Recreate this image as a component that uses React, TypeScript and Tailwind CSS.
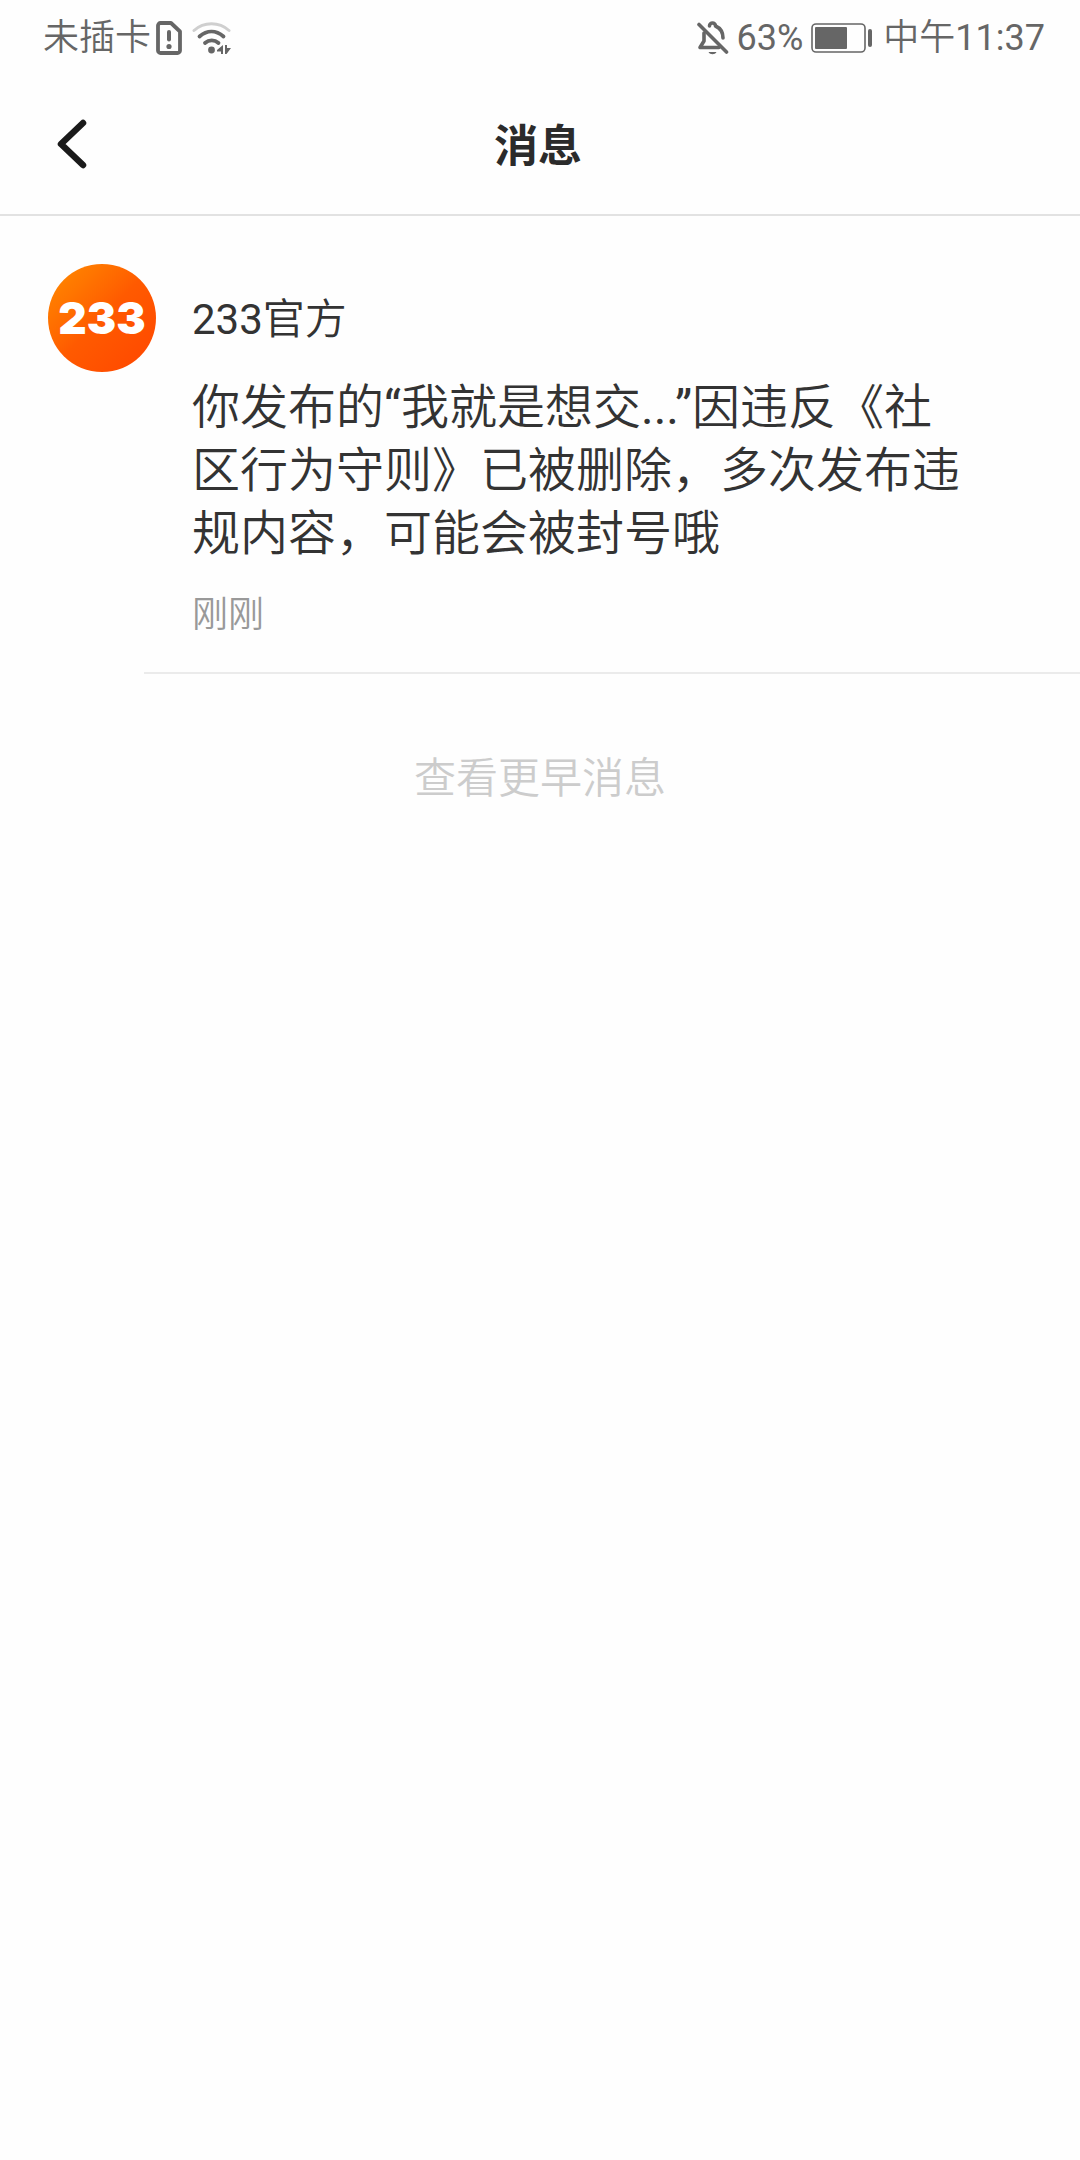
const messages = [
  {
    id: 1,
    sender: "233官方",
    text: "你发布的“我就是想交...”因违反《社区行为守则》已被删除，多次发布违规内容，可能会被封号哦",
    time: "刚刚",
  },
];

function SimAlertIcon() {
  return (
    <svg width="26" height="34" viewBox="0 0 26 34" fill="none" stroke="#666" aria-hidden="true">
      <path d="M4.500 2H15L24 10.500V29.500A2.500 2.500 0 0 1 21.500 32H4.500A2.500 2.500 0 0 1 2 29.500V4.500A2.500 2.500 0 0 1 4.500 2Z" strokeWidth="3.800" strokeLinejoin="round" />
      <path d="M13 11V18.500" strokeWidth="4" strokeLinecap="round" />
      <circle cx="13" cy="25.500" r="2.600" fill="#666" stroke="none" />
    </svg>
  );
}

function WifiIcon() {
  return (
    <svg width="40" height="34" viewBox="0 0 40 34" fill="none" strokeLinecap="round" aria-hidden="true">
      <path d="M2 9.500C12 0.500 27 0.500 37 9.500" stroke="#cfcfcf" strokeWidth="3" />
      <path d="M7.500 15.500C15 9 24 9 31.500 15.500" stroke="#666" strokeWidth="3.800" />
      <path d="M13 22C17 18.500 22.500 18.500 26.500 22" stroke="#666" strokeWidth="3.800" />
      <circle cx="19.500" cy="29" r="3.400" fill="#666" />
      <path d="M25 29L31 24V33H29V30.500H25ZM33 24H35V27H39L34.500 33H33Z" fill="#666" />
    </svg>
  );
}

function BellOffIcon() {
  return (
    <svg width="32" height="34" viewBox="0 0 32 34" fill="none" stroke="#666" strokeWidth="3.600" strokeLinecap="round" strokeLinejoin="round" aria-hidden="true">
      <path d="M7 12V20L3 26.500H22" />
      <path d="M12.500 5C12.500 1 18.500 1 18.500 5C23 7 26 10 26 17" />
      <path d="M2 3.500L29.500 31" />
      <path d="M11.500 31H19.500C18 34 13 34 11.500 31Z" fill="#666" stroke="none" />
    </svg>
  );
}

function BatteryIcon() {
  return (
    <svg width="62" height="30" viewBox="0 0 62 30" fill="none" aria-hidden="true">
      <rect x="1" y="1" width="53" height="28" rx="4" stroke="#666" strokeWidth="1.600" />
      <rect x="4" y="4" width="32" height="22" rx="1" fill="#666" />
      <rect x="57" y="6" width="4" height="18" rx="2" fill="#666" />
    </svg>
  );
}

function StatusBar() {
  return (
    <div className="flex h-[76px] items-center justify-between pl-[43px] pr-[35px] text-[36px] leading-[48px] text-[#666]">
      <div className="flex items-center">
        <span>未插卡</span>
        <div className="ml-[5px] flex items-center gap-[10px]">
          <SimAlertIcon />
          <WifiIcon />
        </div>
      </div>
      <div className="flex items-center">
        <BellOffIcon />
        <span className="mx-2">63%</span>
        <BatteryIcon />
        <span className="ml-[10px]">中午11:37</span>
      </div>
    </div>
  );
}

function Header() {
  return (
    <header className="grid h-[140px] grid-cols-[1fr_auto_1fr] items-center border-b-2 border-[#e2e2e2] pr-1">
      <button type="button" aria-label="返回" className="ml-12 flex size-12 items-center justify-center">
        <svg width="48" height="54" viewBox="0 0 48 54" fill="none" stroke="#1a1a1a" strokeWidth="6.500" strokeLinecap="round" strokeLinejoin="round" className="shrink-0" aria-hidden="true">
          <path d="M35 5L13 26L35 47" />
        </svg>
      </button>
      <h1 className="pt-1 font-[Roboto,'Noto_Sans_CJK_SC',sans-serif] text-[44px] font-bold leading-[60px] text-[#2b2b2b]">消息</h1>
    </header>
  );
}

function Avatar() {
  return (
    <div className="flex size-[108px] shrink-0 items-center justify-center rounded-full bg-linear-to-br from-[#ff8c00] via-[#ff5a00] via-50% to-[#ff4500] font-[Inter,sans-serif] text-[44px] font-black leading-none text-white">
      233
    </div>
  );
}

export default function App() {
  return (
    <div lang="zh-CN" className="min-h-screen bg-[#fefefe] font-[Roboto,'Noto_Sans_CJK_SC_DemiLight','Noto_Sans_CJK_SC',sans-serif]">
      <StatusBar />
      <Header />

      <main>
        {messages.map((message) => (
          <article key={message.id} className="flex pl-12 pt-12">
            <Avatar />
            <div className="min-w-0 flex-1 pl-9 pr-28 pt-[26px]">
              <h2 className="text-[42px] leading-[60px] text-[#333]">{message.sender}</h2>
              <p className="mt-[26px] text-[48px] leading-[63px] text-[#333]">{message.text}</p>
              <time className="mt-[26px] block text-[36px] leading-[48px] text-[#999]">{message.time}</time>
            </div>
          </article>
        ))}
        <hr className="ml-36 mt-[33px] border-t-2 border-[#ebebeb]" />

        <div className="flex justify-center pt-[75px]">
          <button type="button" className="text-[42px] leading-[60px] text-[#ccc]">
            查看更早消息
          </button>
        </div>
      </main>
    </div>
  );
}
